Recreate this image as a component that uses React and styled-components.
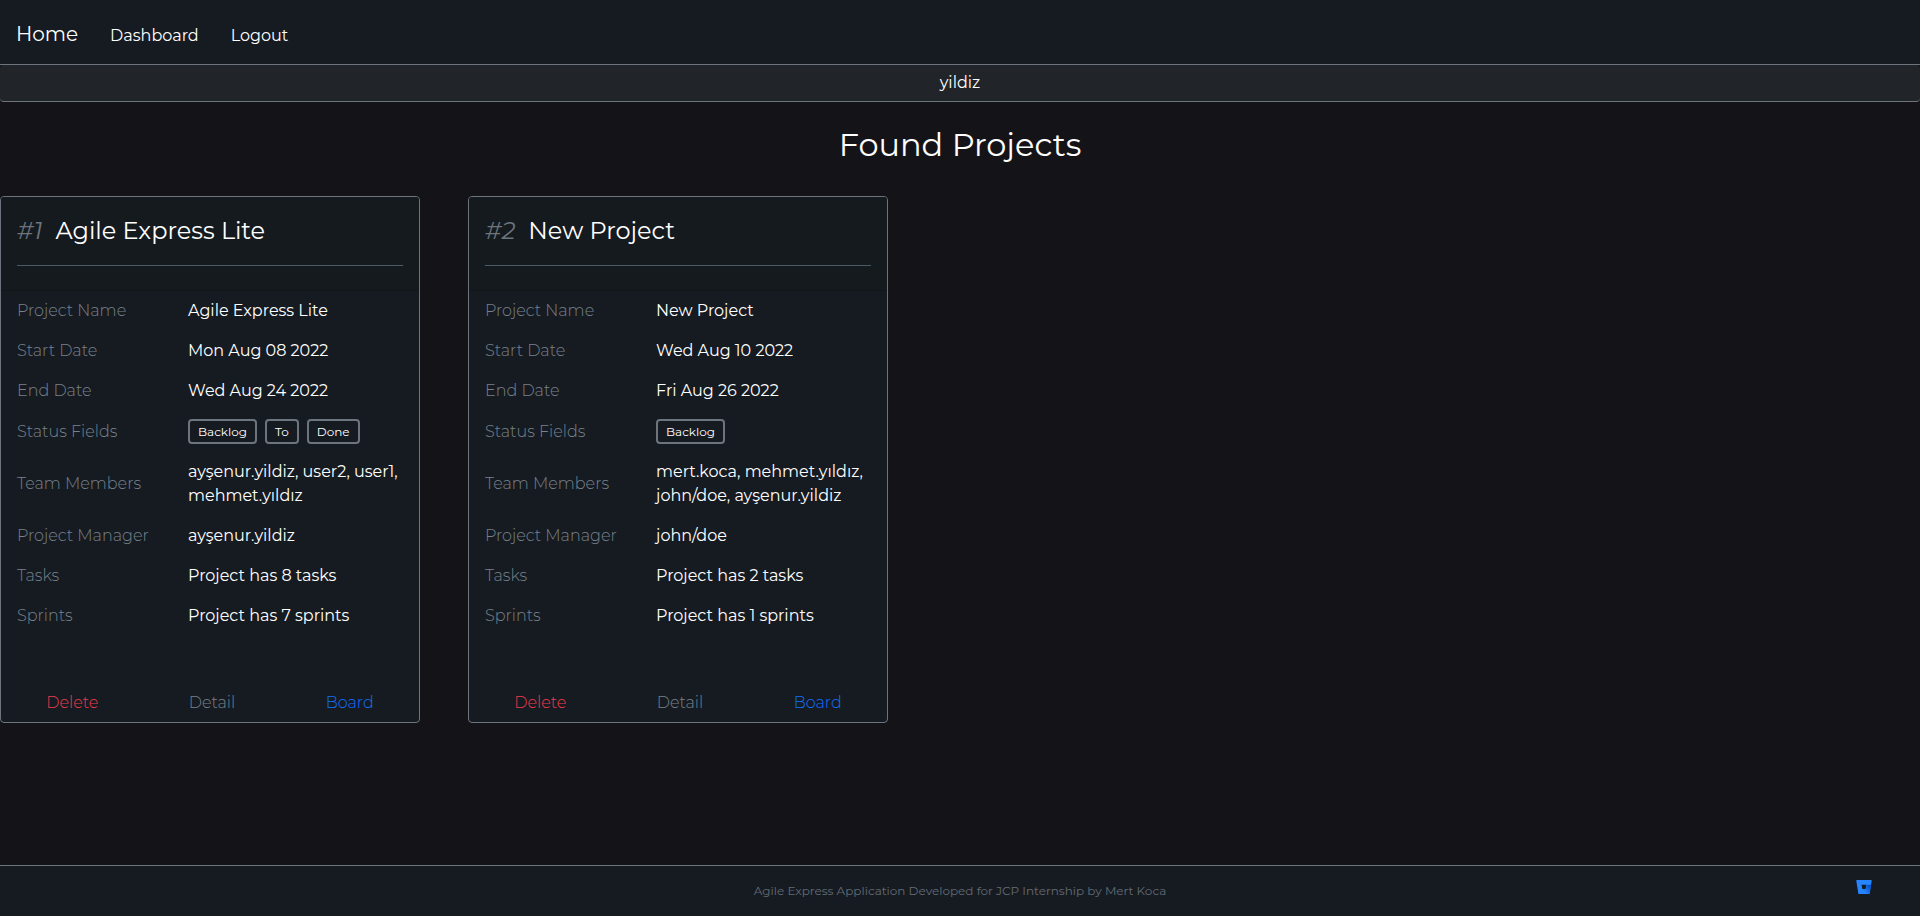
import React from 'react';
import styled, { createGlobalStyle } from 'styled-components';

const colors = {
  page: '#141318',
  panel: '#161b22',
  cardHead: '#151a1f',
  input: '#212529',
  line: '#6c757d',
  muted: '#77828c',
  text: '#ffffff',
  danger: '#f03a4b',
  primary: '#1070ff',
};

const GlobalStyle = createGlobalStyle`
  *, *::before, *::after { box-sizing: border-box; }
  body {
    margin: 0;
    background: ${colors.page};
    color: ${colors.text};
    font-family: Montserrat, Inter, sans-serif;
    font-size: 16px;
    line-height: 24px;
  }
`;

const Page = styled.div`
  min-height: 100vh;
  display: flex;
  flex-direction: column;
`;

const Navbar = styled.nav`
  display: flex;
  align-items: baseline;
  gap: 32px;
  padding: 19px 16px 15px;
  background: ${colors.panel};
  border-bottom: 1px solid ${colors.line};
`;

const NavLink = styled.a`
  color: ${colors.text};
  text-decoration: none;
  font-size: ${(p) => (p.$brand ? 20 : 16)}px;
  line-height: ${(p) => (p.$brand ? 30 : 24)}px;
`;

const SearchInput = styled.input`
  display: block;
  width: 100%;
  padding: 6px 12px;
  border: 0;
  border-bottom: 1px solid ${colors.line};
  border-radius: 4px;
  outline: 0;
  background: ${colors.input};
  color: ${colors.text};
  font: inherit;
  text-align: center;
`;

const Main = styled.main`
  flex: 1;
  padding-bottom: 48px;
`;

const PageTitle = styled.h1`
  margin: 24px 0 32px;
  font-size: 32px;
  line-height: 38px;
  font-weight: 400;
  text-align: center;
`;

const CardList = styled.div`
  display: flex;
  flex-wrap: wrap;
  gap: 48px;
`;

const Card = styled.article`
  width: 420px;
  max-width: 100%;
  background: ${colors.panel};
  border: 1px solid ${colors.line};
  border-radius: 4px;
  overflow: hidden;
`;

const CardHeader = styled.header`
  padding: 16px 16px 24px;
  background: ${colors.cardHead};
  border-bottom: 1px solid #12161b;
`;

const CardTitle = styled.h2`
  display: flex;
  gap: 13px;
  margin: 0;
  padding-bottom: 16px;
  border-bottom: 1px solid #4b5b65;
  font-size: 24px;
  line-height: 36px;
  font-weight: 400;
`;

const CardNumber = styled.em`
  color: ${colors.line};
`;

const DetailTable = styled.table`
  width: 100%;
  border-collapse: collapse;
  table-layout: fixed;
`;

const Label = styled.th`
  width: 187px;
  padding: 8px 16px;
  color: ${colors.muted};
  font-weight: 300;
  text-align: left;
`;

const Value = styled.td`
  padding: 8px 16px 8px 0;
`;

const BadgeList = styled.div`
  display: flex;
  gap: 8px;
`;

const Badge = styled.span`
  padding: 3px 8px 2px;
  border: 2px solid ${colors.line};
  border-radius: 4px;
  font-size: 12px;
  line-height: 16px;
`;

const Actions = styled.div`
  display: flex;
  justify-content: space-around;
  margin-top: 48px;
`;

const ActionButton = styled.button`
  padding: 7px 12px;
  border: 0;
  background: none;
  color: ${(p) => colors[p.$tone]};
  font: inherit;
  font-weight: 300;
  cursor: pointer;
`;

const Footer = styled.footer`
  display: grid;
  grid-template-columns: 1fr auto 1fr;
  align-items: start;
  padding: 14px 48px;
  background: ${colors.panel};
  border-top: 1px solid ${colors.line};
`;

const FooterText = styled.p`
  grid-column: 2;
  margin: 0;
  color: #636c74;
  font-size: 12px;
  line-height: 22px;
`;

const RepoLink = styled.a`
  display: flex;
  justify-self: end;
`;

function BitbucketIcon() {
  return (
    <svg width="16" height="14" viewBox="0 6.26 62.4 56.2" aria-hidden="true">
      <defs>
        <linearGradient id="bucket" gradientUnits="userSpaceOnUse" x1="64" y1="30.3" x2="33" y2="54.5">
          <stop offset="0.18" stopColor="#0052cc" />
          <stop offset="1" stopColor="#2684ff" />
        </linearGradient>
      </defs>
      <path
        fill="#2684ff"
        d="M2 6.26A2 2 0 0 0 0 8.58l8.49 51.54a2.72 2.72 0 0 0 2.66 2.27h40.73a2 2 0 0 0 2-1.68l8.49-52.12a2 2 0 0 0-2-2.32zm35.75 37.25h-13l-3.52-18.39H40.9z"
      />
      <path
        fill="url(#bucket)"
        d="M59.67 25.12H40.9l-3.15 18.39h-13L9.4 61.73a2.71 2.71 0 0 0 1.75.66h40.74a2 2 0 0 0 2-1.68z"
      />
    </svg>
  );
}

const projects = [
  {
    name: 'Agile Express Lite',
    start: 'Mon Aug 08 2022',
    end: 'Wed Aug 24 2022',
    statuses: ['Backlog', 'To', 'Done'],
    members: ['ayşenur.yildiz', 'user2', 'user1', 'mehmet.yıldız'],
    manager: 'ayşenur.yildiz',
    tasks: 8,
    sprints: 7,
  },
  {
    name: 'New Project',
    start: 'Wed Aug 10 2022',
    end: 'Fri Aug 26 2022',
    statuses: ['Backlog'],
    members: ['mert.koca', 'mehmet.yıldız', 'john/doe', 'ayşenur.yildiz'],
    manager: 'john/doe',
    tasks: 2,
    sprints: 1,
  },
];

function Row({ label, children }) {
  return (
    <tr>
      <Label scope="row">{label}</Label>
      <Value>{children}</Value>
    </tr>
  );
}

function ProjectCard({ project, number }) {
  return (
    <Card>
      <CardHeader>
        <CardTitle>
          <CardNumber>#{number}</CardNumber>
          <span>{project.name}</span>
        </CardTitle>
      </CardHeader>
      <DetailTable>
        <tbody>
          <Row label="Project Name">{project.name}</Row>
          <Row label="Start Date">{project.start}</Row>
          <Row label="End Date">{project.end}</Row>
          <Row label="Status Fields">
            <BadgeList>
              {project.statuses.map((status) => (
                <Badge key={status}>{status}</Badge>
              ))}
            </BadgeList>
          </Row>
          <Row label="Team Members">{project.members.join(', ')}</Row>
          <Row label="Project Manager">{project.manager}</Row>
          <Row label="Tasks">{`Project has ${project.tasks} tasks`}</Row>
          <Row label="Sprints">{`Project has ${project.sprints} sprints`}</Row>
        </tbody>
      </DetailTable>
      <Actions>
        <ActionButton type="button" $tone="danger">Delete</ActionButton>
        <ActionButton type="button" $tone="muted">Detail</ActionButton>
        <ActionButton type="button" $tone="primary">Board</ActionButton>
      </Actions>
    </Card>
  );
}

export default function App() {
  return (
    <Page>
      <GlobalStyle />
      <Navbar>
        <NavLink href="#home" $brand>Home</NavLink>
        <NavLink href="#dashboard">Dashboard</NavLink>
        <NavLink href="#logout">Logout</NavLink>
      </Navbar>
      <SearchInput type="text" aria-label="Search projects" defaultValue="yildiz" />
      <Main>
        <PageTitle>Found Projects</PageTitle>
        <CardList>
          {projects.map((project, index) => (
            <ProjectCard key={project.name} project={project} number={index + 1} />
          ))}
        </CardList>
      </Main>
      <Footer>
        <FooterText>Agile Express Application Developed for JCP Internship by Mert Koca</FooterText>
        <RepoLink href="#repository" aria-label="Bitbucket repository">
          <BitbucketIcon />
        </RepoLink>
      </Footer>
    </Page>
  );
}
